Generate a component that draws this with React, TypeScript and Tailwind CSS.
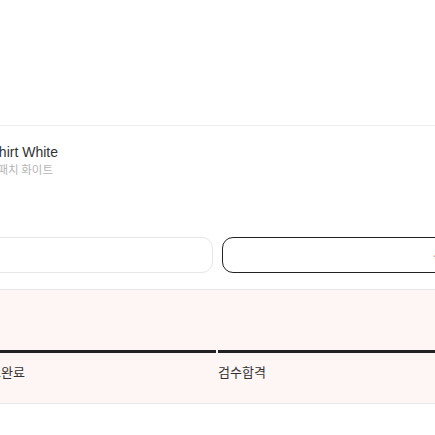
import React from "react";

export default function App() {
  const font = { fontFamily: '"Liberation Sans", "Noto Sans CJK KR", sans-serif' };
  const kr = { fontFamily: '"Noto Sans CJK KR", sans-serif' };
  return (
    <div className="w-[435px] h-[435px] overflow-hidden bg-white" style={font}>
      <div className="h-[126px] border-b border-[#eeeeee]" />
      <div className="pt-[17px]">
        <div className="w-[58px] flex justify-end">
          <span className="whitespace-nowrap text-[14px] leading-[19px] text-[#333333]">Shirt White</span>
        </div>
        <div className="w-[53px] flex justify-end">
          <span className="whitespace-nowrap text-[11.5px] leading-[15px] text-[#b5b5b5]" style={kr}>
            패치 화이트
          </span>
        </div>
      </div>
      <div className="mt-[60px] flex gap-[9px] -ml-[40px]">
        <div className="w-[253px] h-[36px] shrink-0 rounded-[11px] border border-[#e6e6e6] bg-white" />
        <div className="w-[253px] h-[36px] shrink-0 rounded-[11px] border border-[#222222] bg-white flex items-center pl-[210px]">
          <span className="text-[11px] text-[#999999]" style={kr}>선택</span>
        </div>
      </div>
      <div className="mt-[16px] h-[115px] border-t border-b border-[#e8e8e8] bg-[#fdf6f4]">
        <div className="-ml-[23px] mt-[60px] flex gap-[2px]">
          <div className="w-[239px] shrink-0">
            <div className="h-[3px] bg-[#222222]" />
            <div className="pt-[10px] text-[13px] leading-[18px] text-[#333333]" style={kr}>입고완료</div>
          </div>
          <div className="w-[239px] shrink-0">
            <div className="h-[3px] bg-[#222222]" />
            <div className="pt-[10px] text-[13px] leading-[18px] text-[#333333]" style={kr}>검수합격</div>
          </div>
        </div>
      </div>
    </div>
  );
}
